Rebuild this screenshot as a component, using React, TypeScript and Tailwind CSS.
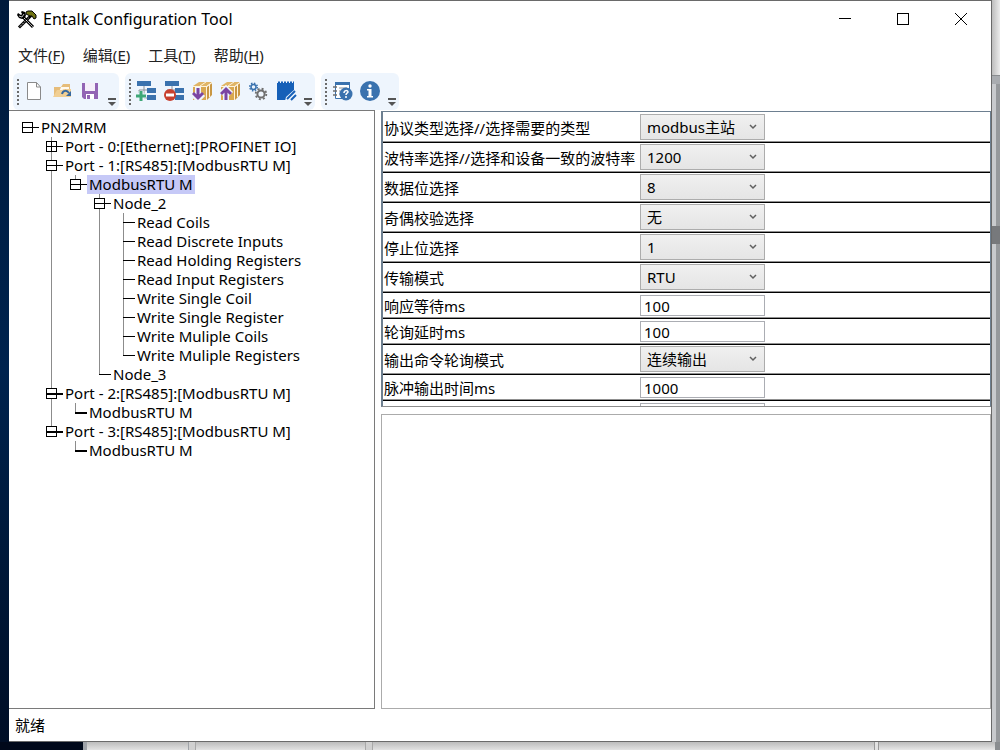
import React, { useState } from 'react';

type Glyph = 'pipe' | 'none' | 'minus' | 'plus' | 'tee' | 'last' | 'root' | 'first' | 'end';

interface TreeNode {
  id: number;
  label: string;
  cells: Glyph[];
  heavy?: boolean;
}

const treeNodes: TreeNode[] = [
  { id: 1, label: 'PN2MRM', cells: ['root'] },
  { id: 2, label: 'Port - 0:[Ethernet]:[PROFINET IO]', cells: ['none', 'plus'] },
  { id: 3, label: 'Port - 1:[RS485]:[ModbusRTU M]', cells: ['none', 'minus'] },
  { id: 4, label: 'ModbusRTU M', cells: ['none', 'pipe', 'first'] },
  { id: 5, label: 'Node_2', cells: ['none', 'pipe', 'none', 'minus'] },
  { id: 6, label: 'Read Coils', cells: ['none', 'pipe', 'none', 'pipe', 'tee'] },
  { id: 7, label: 'Read Discrete Inputs', cells: ['none', 'pipe', 'none', 'pipe', 'tee'] },
  { id: 8, label: 'Read Holding Registers', cells: ['none', 'pipe', 'none', 'pipe', 'tee'] },
  { id: 9, label: 'Read Input Registers', cells: ['none', 'pipe', 'none', 'pipe', 'tee'] },
  { id: 10, label: 'Write Single Coil', cells: ['none', 'pipe', 'none', 'pipe', 'tee'] },
  { id: 11, label: 'Write Single Register', cells: ['none', 'pipe', 'none', 'pipe', 'tee'] },
  { id: 12, label: 'Write Muliple Coils', cells: ['none', 'pipe', 'none', 'pipe', 'tee'] },
  { id: 13, label: 'Write Muliple Registers', cells: ['none', 'pipe', 'none', 'pipe', 'last'] },
  { id: 14, label: 'Node_3', cells: ['none', 'pipe', 'none', 'last'] },
  { id: 15, label: 'Port - 2:[RS485]:[ModbusRTU M]', cells: ['none', 'minus'], heavy: true },
  { id: 16, label: 'ModbusRTU M', cells: ['none', 'pipe', 'last'], heavy: true },
  { id: 17, label: 'Port - 3:[RS485]:[ModbusRTU M]', cells: ['none', 'end'], heavy: true },
  { id: 18, label: 'ModbusRTU M', cells: ['none', 'none', 'last'], heavy: true },
];

interface Field {
  id: string;
  label: string;
  value: string;
  options?: string[];
}

const fields: Field[] = [
  { id: 'protocol', label: '协议类型选择//选择需要的类型', value: 'modbus主站', options: ['modbus主站', 'modbus从站'] },
  { id: 'baud', label: '波特率选择//选择和设备一致的波特率', value: '1200', options: ['1200', '2400', '4800', '9600', '19200'] },
  { id: 'dataBits', label: '数据位选择', value: '8', options: ['7', '8'] },
  { id: 'parity', label: '奇偶校验选择', value: '无', options: ['无', '奇', '偶'] },
  { id: 'stopBits', label: '停止位选择', value: '1', options: ['1', '2'] },
  { id: 'mode', label: '传输模式', value: 'RTU', options: ['RTU', 'ASCII'] },
  { id: 'timeout', label: '响应等待ms', value: '100' },
  { id: 'delay', label: '轮询延时ms', value: '100' },
  { id: 'output', label: '输出命令轮询模式', value: '连续输出', options: ['连续输出', '脉冲输出'] },
  { id: 'pulse', label: '脉冲输出时间ms', value: '1000' },
  { id: 'scan', label: '扫描模式', value: '' },
];

const menus = [
  { label: '文件', key: 'F' },
  { label: '编辑', key: 'E' },
  { label: '工具', key: 'T' },
  { label: '帮助', key: 'H' },
];

const TreeCell = ({ glyph, heavy }: { glyph: Glyph; heavy?: boolean }) => {
  const box = ['root', 'minus', 'plus', 'first', 'end'].includes(glyph);
  const lineEnd = glyph === 'last' || glyph === 'end' || glyph === 'first' ? 9 : 19;
  return (
    <svg width="24" height="19" viewBox="0 0 24 19" className="shrink-0" shapeRendering="crispEdges" aria-hidden="true">
      {glyph !== 'none' && glyph !== 'root' && <rect x="12" y="0" width="1" height={lineEnd} fill="#8c8c8c" />}
      {box && <rect x="7.5" y="4.5" width="10" height="10" fill="white" stroke="black" />}
      {box && <rect x="7" y="9" width="18" height={heavy ? 2 : 1} fill="black" />}
      {glyph === 'plus' && <rect x="12" y="4" width="1" height="11" fill="black" />}
      {(glyph === 'tee' || glyph === 'last') && <rect x="12" y="9" width="13" height={heavy ? 2 : 1} fill="black" />}
    </svg>
  );
};

const AppIcon = () => (
  <svg width="20" height="19" viewBox="0 0 20 19" aria-hidden="true">
    <path d="M3 16.5L13 6.5" stroke="black" strokeWidth="3" strokeLinecap="square" />
    <path d="M3 16.5L12 7.500" stroke="#cfcfcf" strokeWidth="1" strokeDasharray="2 1" />
    <path d="M9 2l2-1h4l4 4v3l-2 1-2-3h-2l-4-2z" fill="#6f7212" stroke="black" strokeWidth="1" />
    <path d="M6 7l10 10" stroke="black" strokeWidth="3" />
    <path d="M7 8l9 9" stroke="white" strokeWidth="1" strokeDasharray="2 1" />
    <path d="M0 5l1-2 3 2 1-1-1-2 1-1 3 1 1 3-1 3-3 1-3-1z" fill="black" />
    <path d="M2 6l3 1 2-3" fill="none" stroke="#bbb" strokeWidth="1" />
  </svg>
);

const NewIcon = () => (
  <svg width="20" height="20" viewBox="0 0 20 20" aria-hidden="true">
    <path d="M3.5 1.5h9l4 4.500v12.500h-13z" fill="white" stroke="#8a8a8a" />
    <path d="M12.500 1.500v4.500h4" fill="none" stroke="#8a8a8a" />
  </svg>
);

const OpenIcon = () => (
  <svg width="20" height="20" viewBox="0 0 20 20" aria-hidden="true">
    <path d="M2 16V6h7l2-3h7v13z" fill="#e6bd7a" />
    <path d="M9 6h8v5H7z" fill="#fffaf0" />
    <path d="M1 16L5 9h5l2-1h7v8z" fill="#f1cf93" />
    <path d="M10 13c1-4 5-4 7-1" fill="none" stroke="#36689e" strokeWidth="2" />
    <path d="M19 10v5h-5z" fill="#36689e" />
  </svg>
);

const SaveIcon = () => (
  <svg width="20" height="20" viewBox="0 0 20 20" aria-hidden="true">
    <path d="M2 2h16v16H4l-2-2z" fill="#9264b4" />
    <path d="M5 2h10v8H5z" fill="#f5effa" />
    <path d="M6 13h8v5H6z" fill="white" />
    <path d="M7 14h3v4H7z" fill="#9264b4" />
  </svg>
);

const blocks = (
  <>
    <path d="M1 0h14v5H1zM11 7h9v5h-9zM11 14h9v5h-9z" fill="#3a72ae" />
    <path d="M8 5v4H3v3M8 9h3M8 9v8h3" fill="none" stroke="#8c9299" />
  </>
);

const AddNodeIcon = () => (
  <svg width="21" height="20" viewBox="0 0 21 20" aria-hidden="true">
    {blocks}
    <path d="M5 10v10M0 15h10" stroke="#eef5fd" strokeWidth="5" />
    <path d="M5 10v10M0 15h10" stroke="#3fa878" strokeWidth="3" />
  </svg>
);

const RemoveNodeIcon = () => (
  <svg width="21" height="20" viewBox="0 0 21 20" aria-hidden="true">
    {blocks}
    <circle cx="6" cy="14" r="6" fill="#c8402f" />
    <path d="M2 14h8" stroke="white" strokeWidth="3" />
  </svg>
);

const BoxIcon = ({ up }: { up?: boolean }) => (
  <svg width="21" height="20" viewBox="0 0 21 20" aria-hidden="true">
    <path d="M1 5l6-4h13l-5 4z" fill="#e0b566" />
    <path d="M1 6h13v13H1z" fill="#d9a850" />
    <path d="M15 6l5-4v12l-5 5z" fill="#c99743" />
    <path d="M1 5.500h13.500V19M14.500 5.500L20 1.500M8 5l6-4M17.500 3v13" fill="none" stroke="#fff3da" />
    {up ? (
      <>
        <path d="M6 20V8M1 13l5-5 5 5" fill="none" stroke="#eef5fd" strokeWidth="6" />
        <path d="M6 19V9M1 13l5-5 5 5" fill="none" stroke="#7b45a2" strokeWidth="3" />
      </>
    ) : (
      <>
        <path d="M6 6v12M1 13l5 5 5-5" fill="none" stroke="#eef5fd" strokeWidth="6" />
        <path d="M6 7v10M1 12l5 5 5-5" fill="none" stroke="#7b45a2" strokeWidth="3" />
      </>
    )}
  </svg>
);

const GearsIcon = () => (
  <svg width="20" height="20" viewBox="0 0 20 20" aria-hidden="true">
    <circle cx="5.500" cy="6" r="2.500" fill="none" stroke="#3a72ae" strokeWidth="1.500" />
    <circle cx="5.500" cy="6" r="3.800" fill="none" stroke="#3a72ae" strokeWidth="1.500" strokeDasharray="1.500 1.480" />
    <circle cx="13" cy="13" r="3.600" fill="none" stroke="#6f6f6f" strokeWidth="2" />
    <circle cx="13" cy="13" r="5.300" fill="none" stroke="#6f6f6f" strokeWidth="1.800" strokeDasharray="2 2.160" />
  </svg>
);

const NotepadIcon = () => (
  <svg width="21" height="20" viewBox="0 0 21 20" aria-hidden="true">
    <path d="M1 2h17v17H1z" fill="#1660b8" />
    <path d="M2 1.500h16" stroke="#1660b8" strokeWidth="2" strokeDasharray="2 1" />
    <path d="M9 20l1-4L19 8h2v12z" fill="#eef5fd" />
    <path d="M11 18l8-8M15 19l5-5" stroke="#1660b8" strokeWidth="2" />
  </svg>
);

const HelpTopicsIcon = () => (
  <svg width="21" height="20" viewBox="0 0 21 20" aria-hidden="true">
    <path d="M3.500 1.500h14v16h-14z" fill="white" stroke="#3a72ae" />
    <path d="M3 1h15v3H3z" fill="#3a72ae" />
    <path d="M1 6h4M1 10h4M1 14h4" stroke="#6f6f6f" strokeWidth="1.500" />
    <path d="M7 7h8M7 10h4M7 13h3" stroke="#8c9299" />
    <circle cx="14" cy="13" r="6.500" fill="#3a72ae" />
    <path d="M12 12c0-3 4-3 4-1 0 1-2 1-2 3M14 15v2" fill="none" stroke="white" strokeWidth="1.500" />
  </svg>
);

const InfoIcon = () => (
  <svg width="20" height="20" viewBox="0 0 20 20" aria-hidden="true">
    <circle cx="10" cy="10" r="10" fill="#3a72ae" />
    <circle cx="10" cy="5" r="1.700" fill="white" />
    <path d="M7 8h4.500v7H13v1.500H7V15h1.500V9.500H7z" fill="white" />
  </svg>
);

const toolGroups = [
  [
    { name: '新建', icon: <NewIcon /> },
    { name: '打开', icon: <OpenIcon /> },
    { name: '保存', icon: <SaveIcon /> },
  ],
  [
    { name: '添加节点', icon: <AddNodeIcon /> },
    { name: '删除节点', icon: <RemoveNodeIcon /> },
    { name: '下载', icon: <BoxIcon /> },
    { name: '上传', icon: <BoxIcon up /> },
    { name: '设置', icon: <GearsIcon /> },
    { name: '记录', icon: <NotepadIcon /> },
  ],
  [
    { name: '帮助主题', icon: <HelpTopicsIcon /> },
    { name: '关于', icon: <InfoIcon /> },
  ],
];

const TitleBar = () => (
  <header className="flex h-9 items-center justify-between">
    <div className="flex items-center gap-1.5 pl-2">
      <AppIcon />
      <h1 className="text-base leading-6">Entalk Configuration Tool</h1>
    </div>
    <div className="flex pr-px">
      <button className="flex h-9 w-[58px] items-center justify-center" aria-label="Minimize">
        <svg width="12" height="12" shapeRendering="crispEdges"><path d="M0 5.500h12" stroke="black" /></svg>
      </button>
      <button className="flex h-9 w-[58px] items-center justify-center" aria-label="Maximize">
        <svg width="12" height="12" shapeRendering="crispEdges"><rect x="0.500" y="0.500" width="11" height="11" fill="none" stroke="black" /></svg>
      </button>
      <button className="flex h-9 w-[58px] items-center justify-center" aria-label="Close">
        <svg width="12" height="12"><path d="M0 0l12 12M12 0L0 12" stroke="black" /></svg>
      </button>
    </div>
  </header>
);

const Toolbar = () => (
  <div className="flex gap-1.5 pl-1">
    {toolGroups.map((group, index) => (
      <div key={index} role="toolbar" className="flex h-[37px] items-center rounded-md bg-[#eef5fd] px-[3px]">
        <svg width="4" height="26" aria-hidden="true">
          <path d="M2 0v26" stroke="#6b6b6b" strokeWidth="2" strokeDasharray="2 2" />
        </svg>
        {group.map((tool) => (
          <button key={tool.name} aria-label={tool.name} className="flex h-7 w-7 items-center justify-center pb-0.5">
            {tool.icon}
          </button>
        ))}
        <button aria-label="更多" className="flex h-full items-end pb-1 pl-1">
          <svg width="8" height="9" viewBox="0 0 8 9">
            <path d="M0 1h8v2H0zM0 5h8L4 9z" fill="#555" />
          </svg>
        </button>
      </div>
    ))}
  </div>
);

const FieldControl = ({ field }: { field: Field }) => {
  const [value, setValue] = useState(field.value);

  if (!field.options) {
    return (
      <input
        id={field.id}
        value={value}
        onChange={(e) => setValue(e.target.value)}
        className="block h-[21px] w-[125px] border border-[#abadb3] bg-white px-[3px] text-[15px] leading-[19px]"
      />
    );
  }

  return (
    <div className="relative w-[125px]">
      <select
        id={field.id}
        value={value}
        onChange={(e) => setValue(e.target.value)}
        className="block h-[26px] w-full appearance-none border border-[#acacac] bg-linear-to-b from-[#f0f0f0] to-[#e5e5e5] px-1.5 text-[15px] leading-6"
      >
        {field.options.map((option) => (
          <option key={option}>{option}</option>
        ))}
      </select>
      <svg width="8" height="6" className="pointer-events-none absolute top-2.5 right-2" aria-hidden="true">
        <path d="M1 1l3 3 3-3" fill="none" stroke="#606060" strokeWidth="1.500" />
      </svg>
    </div>
  );
};

const App = () => {
  const [selected, setSelected] = useState(4);

  return (
    <div className="flex h-screen flex-col bg-[#00081a] font-['Noto_Sans','Noto_Sans_CJK_SC',sans-serif] text-[15px] text-black">
      <div className="flex min-h-0 flex-1">
        {/* Desktop edge on the left */}
        <div className="w-[9px] shrink-0 bg-linear-to-b from-[#001a3c] via-[#00234e] to-[#000e26]" />

        {/* Main window */}
        <div className="flex min-w-0 flex-1 flex-col border-t border-r border-b border-[#6a6a6a] bg-white">
          <TitleBar />
          <nav className="flex h-9 items-center gap-[18px] pl-[9px]">
            {menus.map((menu) => (
              <button key={menu.key} className="leading-6 whitespace-nowrap text-[#222]">
                {menu.label}(<span className="underline underline-offset-2">{menu.key}</span>)
              </button>
            ))}
          </nav>
          <Toolbar />

          <main className="grid min-h-0 flex-1 grid-cols-[3fr_5fr] gap-1.5">
            {/* Device tree */}
            <ul role="tree" className="overflow-hidden border border-l-0 border-[#7a7a7a] pt-[7px] pl-1.5">
              {treeNodes.map((node) => (
                <li key={node.id} role="treeitem" aria-selected={node.id === selected} className="flex h-[19px]">
                  {node.cells.map((glyph, i) => (
                    <TreeCell key={i} glyph={glyph} heavy={node.heavy} />
                  ))}
                  <button
                    onClick={() => setSelected(node.id)}
                    className={`px-0.5 leading-[19px] whitespace-nowrap ${node.id === selected ? 'bg-[#c6c9f7]' : ''}`}
                  >
                    {node.label}
                  </button>
                </li>
              ))}
            </ul>

            <div className="grid min-h-0 min-w-0 grid-rows-2 gap-[7px] pt-px">
              {/* Port parameters */}
              <section className="min-h-0 overflow-hidden border border-l-2 border-[#6d7f90] border-b-[#8c8c8c] pt-px">
                <table className="w-full border-separate border-spacing-0">
                  <tbody>
                    {fields.map((field) => (
                      <tr key={field.id}>
                        <th scope="row" className="w-[257px] border-b border-black p-0 pl-px text-left font-normal shadow-[inset_0_-1px_#909090]">
                          <label htmlFor={field.id} className="block leading-6 whitespace-nowrap">{field.label}</label>
                        </th>
                        <td className={`border-b border-black p-0 pb-0.5 shadow-[inset_0_-1px_#909090] ${field.options ? 'pt-px' : 'pt-0.5'}`}>
                          <FieldControl field={field} />
                        </td>
                      </tr>
                    ))}
                  </tbody>
                </table>
              </section>
              <section className="border border-[#ababab]" />
            </div>
          </main>

          <footer className="flex h-8 items-center pl-1.5">就绪</footer>
        </div>

        {/* Window behind, right edge */}
        <div className="flex w-2 shrink-0 flex-col bg-[#96999c]">
          <div className="h-[76px] border-b border-[#8a8d90] bg-linear-to-r from-[#bdbdbd] to-[#ececec]" />
          <div className="h-2 bg-[#a9acb0]" />
          <div className="h-[142px] border-l-4 border-[#c8cacd]" />
          <div className="h-[18px] bg-[#77797c]" />
          <div className="flex-1 border-l-4 border-[#c8cacd]" />
        </div>
      </div>

      {/* Window behind, bottom edge */}
      <div className="flex h-2 shrink-0 pl-[83px]">
        <div className="w-[106px] border-r border-l-4 border-[#9fa3a8] bg-linear-to-b from-[#bcbcbc] to-[#e2e2e2]" />
        <div className="w-[7px] border-r border-[#a8a8a8] bg-[#d0d0d0]" />
        <div className="w-[170px] border-r border-[#a8a8a8] bg-linear-to-b from-[#bcbcbc] to-[#e2e2e2]" />
        <div className="w-[7px] border-r border-[#a8a8a8] bg-[#d0d0d0]" />
        <div className="flex-1 bg-linear-to-b from-[#bcbcbc] to-[#e2e2e2]" />
        <div className="w-[5px] border-x border-[#999] bg-[#e2e2e2]" />
        <div className="w-[116px] bg-linear-to-b from-[#bcbcbc] to-[#e8e8e8]" />
        <div className="w-[5px] bg-[#8a8d90]" />
      </div>
    </div>
  );
};

export default App;
